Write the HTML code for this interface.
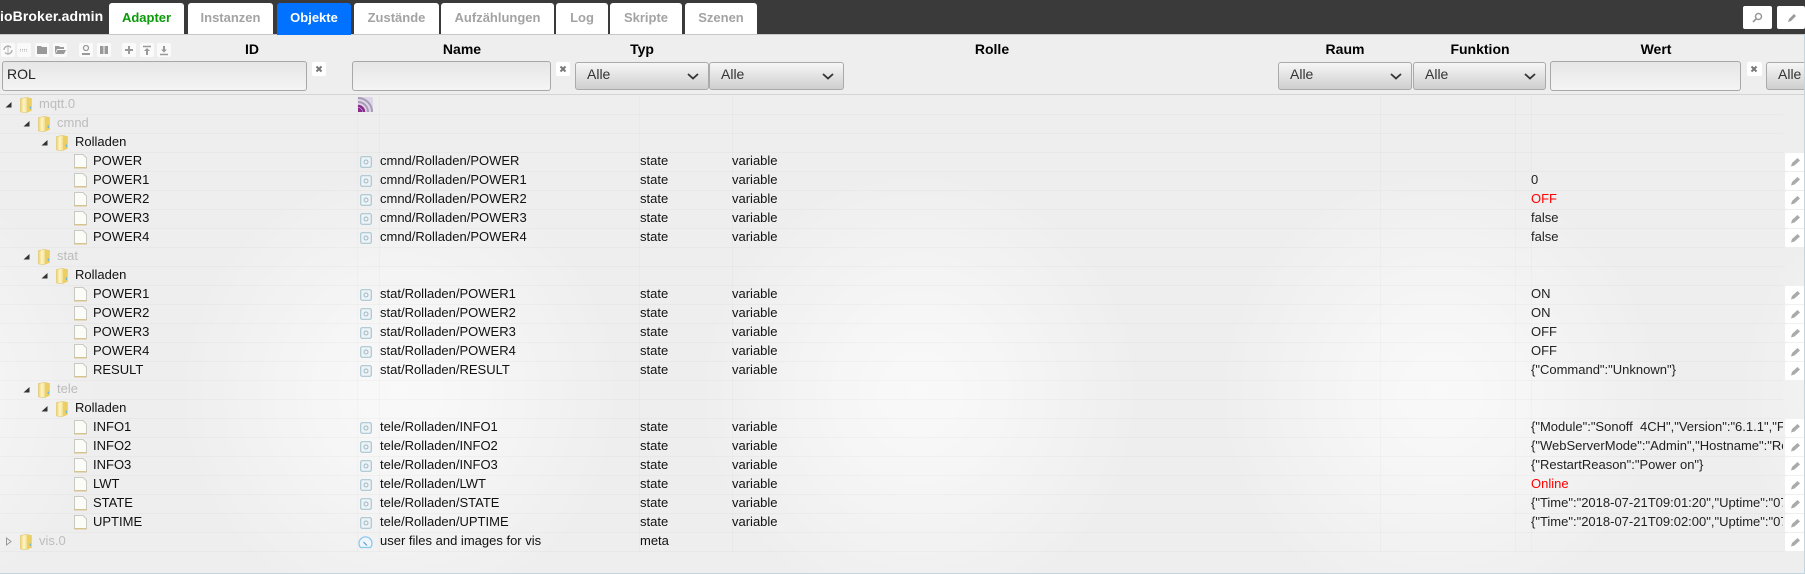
<!DOCTYPE html>
<html><head><meta charset="utf-8">
<style>
html,body{margin:0;padding:0;width:1805px;height:574px;overflow:hidden}
body{font-family:"Liberation Sans",sans-serif;font-size:13px;color:#111;position:relative;background:#eee}
.bg{position:absolute;left:0;top:34px;width:1805px;height:539px;background-color:#eee;background-image:radial-gradient(circle 225px at 260px 260px,#f9f9f9 0%,#f6f6f6 35%,#f1f1f1 75%,#eee 100%);background-size:520px 520px;background-position:140px 99px;background-repeat:repeat-x}
.top{position:absolute;left:0;top:0;width:1805px;height:34px;background:#3a3a3a;border-bottom:1px solid #c8c8c8}
.logo{position:absolute;left:0;top:8px;color:#fff;font-weight:bold;font-size:14px;line-height:16px;white-space:nowrap;width:104px;overflow:hidden;letter-spacing:.1px}
.tab{position:absolute;top:3px;height:31px;background:#fff;border-radius:3px 3px 0 0;text-align:center;font-weight:bold;font-size:13px;line-height:29px;color:#a3a3a3}
.tab.a{color:#0a9a0a}.tab.o{background:#0072ff;color:#fff;top:3px;height:32px}
.tbt{position:absolute;top:6px;height:23px;background:#fff;border-radius:2px}
.b{position:absolute;top:43px;width:14px;height:14px;background:#fafafa;border-radius:2px}
.b svg,.tbt svg,.e svg,.x svg{position:absolute;left:0;top:0}
.h{position:absolute;top:41px;font-weight:bold;font-size:14px;line-height:16px;transform:translateX(-50%);white-space:nowrap;color:#000}
.in{position:absolute;top:61px;height:28px;box-sizing:content-box;border:1px solid #a8a8a8;border-radius:3px;background:linear-gradient(#e6e6e6,#f4f4f4);font-size:14px;line-height:24px;color:#222;padding-left:4px}
.x{position:absolute;top:62px;width:14px;height:14px;background:#fff;border-radius:2px}
.s{position:absolute;top:62px;height:26px;border:1px solid #aaa;border-radius:3px;background:linear-gradient(#f6f6f6,#cfcfcf);font-size:14px;line-height:23px;color:#333;padding-left:11px;box-sizing:content-box}
.s svg{position:absolute;right:9px;top:10px}
.hl{position:absolute;left:0;top:94px;width:1805px;height:1px;background:#d4d4d4}
.r{position:absolute;left:0;width:1783px;height:18px;border-bottom:1px solid rgba(0,0,0,.025);line-height:15px}
.v{position:absolute;top:96px;height:456px;width:1px;background:rgba(0,0,0,.02)}
.r span,.r svg{position:absolute}
.t{top:0;white-space:nowrap}
.g{color:#bcbcbc}
.n{left:380px;top:0;white-space:nowrap}
.ty{left:640px;top:0}
.ro{left:732px;top:0}
.w{left:1531px;top:0;width:252px;height:17px;overflow:hidden;white-space:nowrap;color:#222}
.red{color:#f00}
.e{position:absolute;left:1785px;width:20px;height:18px;background:#fff;border-radius:2px}
.bot{position:absolute;left:0;top:573px;width:1805px;height:1px;background:#c3d5df}
.rt{position:absolute;left:1804px;top:34px;width:1px;height:540px;background:#c3d5df}
</style></head><body>
<svg width="0" height="0" style="position:absolute">
<defs>
<linearGradient id="fg" x1="0" x2="1" y1="0" y2="0"><stop offset="0" stop-color="#ecd06a"/><stop offset=".3" stop-color="#fff6c8"/><stop offset=".6" stop-color="#f3dc8a"/><stop offset="1" stop-color="#e6c24e"/></linearGradient>
<symbol id="fo" viewBox="0 0 12 16"><path d="M.5 1.500l6-1 5 1v12l-5 2-6-.5z" fill="url(#fg)" stroke="#dcbf5c" stroke-width=".5"/><path d="M7 1l4.500.5v12l-4.500 2z" fill="#eccf64"/><path d="M10.300 9.500v2.500" stroke="#6fb7d8" stroke-width="1.300"/></symbol>
<symbol id="fi" viewBox="0 0 13 15"><path d="M.5.500h8.500l3.500 3.500v10h-12z" fill="#fbfbf8" stroke="#c9c9c4"/><path d="M.5 13.700h12" stroke="#d8c48a" stroke-width="1.400"/></symbol>
<symbol id="st" viewBox="0 0 12 12"><rect x=".7" y=".7" width="10.600" height="10.600" rx="1.500" fill="#eef3f5" stroke="#a9c6d3" stroke-width="1.200"/><circle cx="6" cy="6" r="2" fill="none" stroke="#9db9c7"/></symbol>
<symbol id="pe" viewBox="0 0 20 18"><path d="M6 13.500l1-3.500 5.500-5 2.500 2.500-5.500 5z" fill="#aaa"/></symbol>
<symbol id="xx" viewBox="0 0 14 14"><path d="M4.500 4.500l5 5m0-5l-5 5" stroke="#777" stroke-width="2"/></symbol>
<symbol id="ch" viewBox="0 0 12 7"><path d="M1 1l5 4.500 5-4.500" fill="none" stroke="#333" stroke-width="1.800"/></symbol>
<symbol id="tr" viewBox="0 0 7 7"><path d="M6.500 1v5.500h-6z" fill="#333"/></symbol>
</defs></svg>
<div class="bg"></div>
<div class="top"></div>
<div class="logo">ioBroker.admin</div>
<div class="tab a" style="left:109px;width:75px">Adapter</div>
<div class="tab" style="left:188px;width:85px">Instanzen</div>
<div class="tab o" style="left:277px;width:74px">Objekte</div>
<div class="tab" style="left:354px;width:85px">Zustände</div>
<div class="tab" style="left:441px;width:113px">Aufzählungen</div>
<div class="tab" style="left:556px;width:52px">Log</div>
<div class="tab" style="left:610px;width:72px">Skripte</div>
<div class="tab" style="left:685px;width:72px">Szenen</div>
<div class="tbt" style="left:1743px;width:29px"><svg width="29" height="23"><circle cx="15.500" cy="10.500" r="3" fill="none" stroke="#999" stroke-width="1.500"/><path d="M13 13l-3 3" stroke="#999" stroke-width="1.800"/></svg></div>
<div class="tbt" style="left:1777px;width:28px"><svg width="28" height="23"><path d="M11 16l1-3 5-5 2 2-5 5z" fill="#999"/></svg></div>

<div class="b" style="left:1px"><svg width="14" height="14"><path d="M3 7a4 4 0 0 1 7-2.500M11 7a4 4 0 0 1-7 2.500" fill="none" stroke="#aaa" stroke-width="1.300"/><path d="M7 2v10" stroke="#bbb"/></svg></div>
<div class="b" style="left:17px"><svg width="14" height="14"><path d="M3 6.500h8M3 8h8" stroke="#bbb" stroke-dasharray="1 1"/></svg></div>
<div class="b" style="left:35px"><svg width="14" height="14"><path d="M2 3h4l1 1h5v7H2z" fill="#999"/></svg></div>
<div class="b" style="left:53px"><svg width="14" height="14"><path d="M2 3h4l1 1h4v2H4l-2 5zM4.500 7H13l-2 4H2.500z" fill="#999"/></svg></div>
<div class="b" style="left:79px"><svg width="14" height="14"><circle cx="7" cy="5" r="2.500" fill="none" stroke="#999" stroke-width="1.300"/><path d="M3 10h8v2H3z" fill="#999"/></svg></div>
<div class="b" style="left:97px"><svg width="14" height="14"><path d="M3 3h3.500v8H3zM7.500 3H11v8H7.500z" fill="#999"/></svg></div>
<div class="b" style="left:122px"><svg width="14" height="14"><path d="M7 3v8M3 7h8" stroke="#999" stroke-width="2"/></svg></div>
<div class="b" style="left:140px"><svg width="14" height="14"><path d="M3 3.500h8" stroke="#999" stroke-width="1.500"/><path d="M4 8l3-3 3 3H8v4H6V8z" fill="#999"/></svg></div>
<div class="b" style="left:157px"><svg width="14" height="14"><path d="M3 11.500h8" stroke="#999" stroke-width="1.500"/><path d="M4 6.500l3 3 3-3H8V3H6v3.500z" fill="#999"/></svg></div>

<div class="h" style="left:252px">ID</div>
<div class="h" style="left:462px">Name</div>
<div class="h" style="left:642px">Typ</div>
<div class="h" style="left:992px">Rolle</div>
<div class="h" style="left:1345px">Raum</div>
<div class="h" style="left:1480px">Funktion</div>
<div class="h" style="left:1656px">Wert</div>

<div class="in" style="left:2px;width:299px">ROL</div>
<div class="x" style="left:312px"><svg width="14" height="14"><use href="#xx"/></svg></div>
<div class="in" style="left:352px;width:193px"></div>
<div class="x" style="left:556px"><svg width="14" height="14"><use href="#xx"/></svg></div>
<div class="s" style="left:575px;width:121px">Alle<svg width="12" height="7"><use href="#ch"/></svg></div>
<div class="s" style="left:709px;width:122px">Alle<svg width="12" height="7"><use href="#ch"/></svg></div>
<div class="s" style="left:1278px;width:121px">Alle<svg width="12" height="7"><use href="#ch"/></svg></div>
<div class="s" style="left:1413px;width:120px">Alle<svg width="12" height="7"><use href="#ch"/></svg></div>
<div class="in" style="left:1550px;width:185px"></div>
<div class="x" style="left:1747px;width:15px"><svg width="14" height="14"><use href="#xx"/></svg></div>
<div class="s" style="left:1766px;width:50px">Alle</div>
<div class="hl"></div>

<div class="v" style="left:357px"></div><div class="v" style="left:379px"></div><div class="v" style="left:639px"></div><div class="v" style="left:732px"></div><div class="v" style="left:1380px"></div><div class="v" style="left:1515px"></div><div class="v" style="left:1531px"></div>

<div class="r" style="top:96px"><svg style="left:5px;top:5px" width="7" height="7"><use href="#tr"/></svg><svg style="left:20px;top:1px" width="12" height="16"><use href="#fo"/></svg><span class="t g" style="left:39px">mqtt.0</span>
<svg style="left:358px;top:1px" width="15" height="15"><rect width="15" height="15" rx="2" fill="#ddd6e6"/><path d="M0 15V12a3 3 0 0 1 3 3zM0 9a6 6 0 0 1 6 6" fill="none" stroke="#8a2b8d" stroke-width="2.500"/><path d="M0 5a10 10 0 0 1 10 10M0 1a14 14 0 0 1 14 14" fill="none" stroke="#a99bb8" stroke-width="2"/></svg></div>

<div class="r" style="top:115px"><svg style="left:23px;top:5px" width="7" height="7"><use href="#tr"/></svg><svg style="left:38px;top:1px" width="12" height="16"><use href="#fo"/></svg><span class="t g" style="left:57px">cmnd</span></div>

<div class="r" style="top:134px"><svg style="left:41px;top:5px" width="7" height="7"><use href="#tr"/></svg><svg style="left:56px;top:1px" width="12" height="16"><use href="#fo"/></svg><span class="t" style="left:75px">Rolladen</span></div>

<div class="r" style="top:153px"><svg style="left:74px;top:1px" width="13" height="15"><use href="#fi"/></svg><span class="t" style="left:93px">POWER</span><svg style="left:360px;top:3px" width="12" height="12"><use href="#st"/></svg><span class="n">cmnd/Rolladen/POWER</span><span class="ty">state</span><span class="ro">variable</span><span class="w"></span><div class="e" style="top:0"><svg width="20" height="18"><use href="#pe"/></svg></div></div>
<div class="r" style="top:172px"><svg style="left:74px;top:1px" width="13" height="15"><use href="#fi"/></svg><span class="t" style="left:93px">POWER1</span><svg style="left:360px;top:3px" width="12" height="12"><use href="#st"/></svg><span class="n">cmnd/Rolladen/POWER1</span><span class="ty">state</span><span class="ro">variable</span><span class="w">0</span><div class="e" style="top:0"><svg width="20" height="18"><use href="#pe"/></svg></div></div>
<div class="r" style="top:191px"><svg style="left:74px;top:1px" width="13" height="15"><use href="#fi"/></svg><span class="t" style="left:93px">POWER2</span><svg style="left:360px;top:3px" width="12" height="12"><use href="#st"/></svg><span class="n">cmnd/Rolladen/POWER2</span><span class="ty">state</span><span class="ro">variable</span><span class="w red">OFF</span><div class="e" style="top:0"><svg width="20" height="18"><use href="#pe"/></svg></div></div>
<div class="r" style="top:210px"><svg style="left:74px;top:1px" width="13" height="15"><use href="#fi"/></svg><span class="t" style="left:93px">POWER3</span><svg style="left:360px;top:3px" width="12" height="12"><use href="#st"/></svg><span class="n">cmnd/Rolladen/POWER3</span><span class="ty">state</span><span class="ro">variable</span><span class="w">false</span><div class="e" style="top:0"><svg width="20" height="18"><use href="#pe"/></svg></div></div>
<div class="r" style="top:229px"><svg style="left:74px;top:1px" width="13" height="15"><use href="#fi"/></svg><span class="t" style="left:93px">POWER4</span><svg style="left:360px;top:3px" width="12" height="12"><use href="#st"/></svg><span class="n">cmnd/Rolladen/POWER4</span><span class="ty">state</span><span class="ro">variable</span><span class="w">false</span><div class="e" style="top:0"><svg width="20" height="18"><use href="#pe"/></svg></div></div>

<div class="r" style="top:248px"><svg style="left:23px;top:5px" width="7" height="7"><use href="#tr"/></svg><svg style="left:38px;top:1px" width="12" height="16"><use href="#fo"/></svg><span class="t g" style="left:57px">stat</span></div>
<div class="r" style="top:267px"><svg style="left:41px;top:5px" width="7" height="7"><use href="#tr"/></svg><svg style="left:56px;top:1px" width="12" height="16"><use href="#fo"/></svg><span class="t" style="left:75px">Rolladen</span></div>

<div class="r" style="top:286px"><svg style="left:74px;top:1px" width="13" height="15"><use href="#fi"/></svg><span class="t" style="left:93px">POWER1</span><svg style="left:360px;top:3px" width="12" height="12"><use href="#st"/></svg><span class="n">stat/Rolladen/POWER1</span><span class="ty">state</span><span class="ro">variable</span><span class="w">ON</span><div class="e" style="top:0"><svg width="20" height="18"><use href="#pe"/></svg></div></div>
<div class="r" style="top:305px"><svg style="left:74px;top:1px" width="13" height="15"><use href="#fi"/></svg><span class="t" style="left:93px">POWER2</span><svg style="left:360px;top:3px" width="12" height="12"><use href="#st"/></svg><span class="n">stat/Rolladen/POWER2</span><span class="ty">state</span><span class="ro">variable</span><span class="w">ON</span><div class="e" style="top:0"><svg width="20" height="18"><use href="#pe"/></svg></div></div>
<div class="r" style="top:324px"><svg style="left:74px;top:1px" width="13" height="15"><use href="#fi"/></svg><span class="t" style="left:93px">POWER3</span><svg style="left:360px;top:3px" width="12" height="12"><use href="#st"/></svg><span class="n">stat/Rolladen/POWER3</span><span class="ty">state</span><span class="ro">variable</span><span class="w">OFF</span><div class="e" style="top:0"><svg width="20" height="18"><use href="#pe"/></svg></div></div>
<div class="r" style="top:343px"><svg style="left:74px;top:1px" width="13" height="15"><use href="#fi"/></svg><span class="t" style="left:93px">POWER4</span><svg style="left:360px;top:3px" width="12" height="12"><use href="#st"/></svg><span class="n">stat/Rolladen/POWER4</span><span class="ty">state</span><span class="ro">variable</span><span class="w">OFF</span><div class="e" style="top:0"><svg width="20" height="18"><use href="#pe"/></svg></div></div>
<div class="r" style="top:362px"><svg style="left:74px;top:1px" width="13" height="15"><use href="#fi"/></svg><span class="t" style="left:93px">RESULT</span><svg style="left:360px;top:3px" width="12" height="12"><use href="#st"/></svg><span class="n">stat/Rolladen/RESULT</span><span class="ty">state</span><span class="ro">variable</span><span class="w">{"Command":"Unknown"}</span><div class="e" style="top:0"><svg width="20" height="18"><use href="#pe"/></svg></div></div>

<div class="r" style="top:381px"><svg style="left:23px;top:5px" width="7" height="7"><use href="#tr"/></svg><svg style="left:38px;top:1px" width="12" height="16"><use href="#fo"/></svg><span class="t g" style="left:57px">tele</span></div>
<div class="r" style="top:400px"><svg style="left:41px;top:5px" width="7" height="7"><use href="#tr"/></svg><svg style="left:56px;top:1px" width="12" height="16"><use href="#fo"/></svg><span class="t" style="left:75px">Rolladen</span></div>

<div class="r" style="top:419px"><svg style="left:74px;top:1px" width="13" height="15"><use href="#fi"/></svg><span class="t" style="left:93px">INFO1</span><svg style="left:360px;top:3px" width="12" height="12"><use href="#st"/></svg><span class="n">tele/Rolladen/INFO1</span><span class="ty">state</span><span class="ro">variable</span><span class="w">{"Module":"Sonoff&nbsp; 4CH","Version":"6.1.1","FallbackTopic":"DVES"}</span><div class="e" style="top:0"><svg width="20" height="18"><use href="#pe"/></svg></div></div>
<div class="r" style="top:438px"><svg style="left:74px;top:1px" width="13" height="15"><use href="#fi"/></svg><span class="t" style="left:93px">INFO2</span><svg style="left:360px;top:3px" width="12" height="12"><use href="#st"/></svg><span class="n">tele/Rolladen/INFO2</span><span class="ty">state</span><span class="ro">variable</span><span class="w">{"WebServerMode":"Admin","Hostname":"Rolladen"}</span><div class="e" style="top:0"><svg width="20" height="18"><use href="#pe"/></svg></div></div>
<div class="r" style="top:457px"><svg style="left:74px;top:1px" width="13" height="15"><use href="#fi"/></svg><span class="t" style="left:93px">INFO3</span><svg style="left:360px;top:3px" width="12" height="12"><use href="#st"/></svg><span class="n">tele/Rolladen/INFO3</span><span class="ty">state</span><span class="ro">variable</span><span class="w">{"RestartReason":"Power on"}</span><div class="e" style="top:0"><svg width="20" height="18"><use href="#pe"/></svg></div></div>
<div class="r" style="top:476px"><svg style="left:74px;top:1px" width="13" height="15"><use href="#fi"/></svg><span class="t" style="left:93px">LWT</span><svg style="left:360px;top:3px" width="12" height="12"><use href="#st"/></svg><span class="n">tele/Rolladen/LWT</span><span class="ty">state</span><span class="ro">variable</span><span class="w red">Online</span><div class="e" style="top:0"><svg width="20" height="18"><use href="#pe"/></svg></div></div>
<div class="r" style="top:495px"><svg style="left:74px;top:1px" width="13" height="15"><use href="#fi"/></svg><span class="t" style="left:93px">STATE</span><svg style="left:360px;top:3px" width="12" height="12"><use href="#st"/></svg><span class="n">tele/Rolladen/STATE</span><span class="ty">state</span><span class="ro">variable</span><span class="w">{"Time":"2018-07-21T09:01:20","Uptime":"07T00:00:00"}</span><div class="e" style="top:0"><svg width="20" height="18"><use href="#pe"/></svg></div></div>
<div class="r" style="top:514px"><svg style="left:74px;top:1px" width="13" height="15"><use href="#fi"/></svg><span class="t" style="left:93px">UPTIME</span><svg style="left:360px;top:3px" width="12" height="12"><use href="#st"/></svg><span class="n">tele/Rolladen/UPTIME</span><span class="ty">state</span><span class="ro">variable</span><span class="w">{"Time":"2018-07-21T09:02:00","Uptime":"07T00:00:00"}</span><div class="e" style="top:0"><svg width="20" height="18"><use href="#pe"/></svg></div></div>

<div class="r" style="top:533px"><svg style="left:6px;top:4px" width="6" height="9"><path d="M.5 1l4.500 3.500-4.500 3.500z" fill="none" stroke="#999"/></svg><svg style="left:20px;top:1px" width="12" height="16"><use href="#fo"/></svg><span class="t g" style="left:39px">vis.0</span><svg style="left:358px;top:3px" width="15" height="13"><path d="M2.500 11.500a6.500 6.500 0 1 1 10 0z" fill="#eef6fc" stroke="#8cc8ee" stroke-width="1.300"/><path d="M5.500 6l3.500 3.500" stroke="#5f9cc8" stroke-width="1.200"/></svg><span class="n">user files and images for vis</span><span class="ty">meta</span><div class="e" style="top:0"><svg width="20" height="18"><use href="#pe"/></svg></div></div>

<div class="bot"></div><div class="rt"></div>
</body></html>
